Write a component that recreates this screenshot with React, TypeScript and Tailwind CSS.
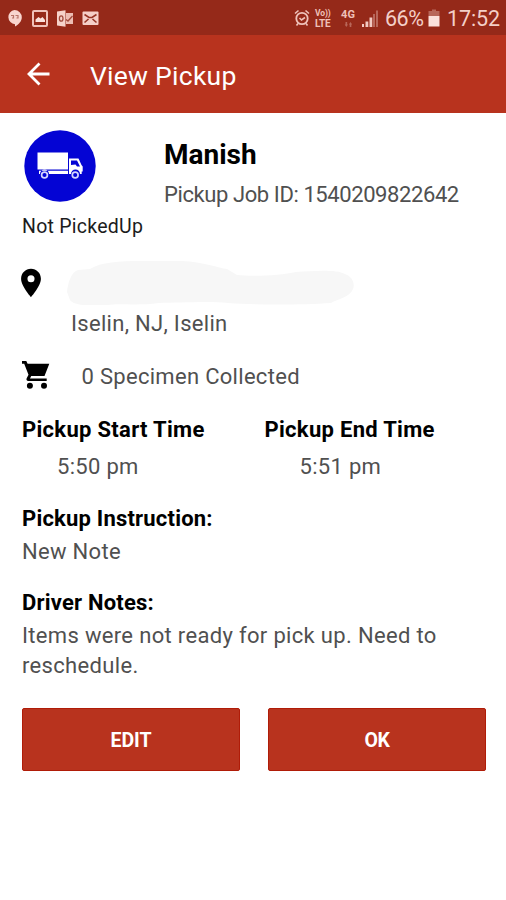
import React from "react";

function StatusBar() {
  return (
    <div className="flex h-[35px] items-center bg-[#952919] text-[#f3cfc8]">
      <svg className="block h-[35px] w-[110px]" viewBox="0 0 110 35">
        <path d="M14.500 10a7.300 7.300 0 0 1 7.300 7.300c0 4-3 7.200-6.800 9.200v-2.200a7.200 7.200 0 0 1-.5-14.300z" fill="#f8d5ce" />
        <path d="M11 15.500h2.500v2.500h-1.500M15.500 15.500h2.500v2.500h-1.500" fill="none" stroke="#b87468" strokeWidth="1.200" />
        <rect x="33" y="11" width="14" height="15" rx="1" fill="none" stroke="#f0c3bb" strokeWidth="2" />
        <path d="M35.500 22v-2.500l3-2.500 2 1.500 2-1.500 2.500 3v2z" fill="#fbe1dc" />
        <path d="M57 11.500l8.500-1.200v16.400L57 25.500z" fill="#f6d2ca" />
        <path d="M66 13h7v11h-7z" fill="#edbdb3" />
        <ellipse cx="61.200" cy="18.500" rx="1.800" ry="2.700" fill="none" stroke="#a14a3c" strokeWidth="1.300" />
        <path d="M66 19.500l2 1.500 4.500-5" fill="none" stroke="#a14a3c" strokeWidth="1.300" />
        <rect x="82.500" y="11.500" width="16" height="13.500" rx="1" fill="#f6cfc8" />
        <path d="M84.500 14.500l4.500 3h3l4.500-3M84.500 22.500l4-3.500M96.500 22.500l-4-3.500" fill="none" stroke="#973526" strokeWidth="1.600" />
      </svg>
      <svg className="ml-[184px] block h-[35px] w-[16px]" viewBox="0 0 16 35" fill="none" stroke="#efc2ba">
        <circle cx="8" cy="18.500" r="5.700" strokeWidth="1.800" />
        <path d="M5.500 18l2 2 3.500-2.500M4 23.500l-1.500 2M12 23.500l1.500 2M1 13.500l3.500-3M15 13.500l-3.500-3" strokeWidth="1.600" />
      </svg>
      <div className="mt-[1px] ml-[5px] w-[17px] font-bold whitespace-nowrap text-[#efc0b8]">
        <div className="text-[8.500px] leading-[10px] tracking-[-0.100px]">Vo))</div>
        <div className="text-[10px] leading-[11px] tracking-[-0.200px]">LTE</div>
      </div>
      <div className="ml-[9px] flex h-[35px] w-[16px] flex-col pt-[10px]">
        <span className="text-[11px] leading-[10px] font-bold text-[#efc0b8]">4G</span>
        <svg className="mt-[2px] ml-[2px] block h-[5px] w-[10px]" viewBox="0 0 10 6" fill="#b86659">
          <path d="M2 0h2v3h1L3 6 1 3h1zM7 6h2V3h1L8 0 6 3h1z" />
        </svg>
      </div>
      <svg className="ml-[4px] block h-[35px] w-[18px]" viewBox="0 0 18 35">
        <path d="M1 24h2v3H1zM4.500 21.500h2.800V27H4.500zM8.500 17.500h2.800V27H8.500z" fill="#f2c9c1" />
        <path d="M12 14h2v13h-2zM15 10.500h2V27h-2z" fill="#b8675a" />
      </svg>
      <span className="mt-[2px] ml-[6px] w-[39px] text-[21.500px] leading-[35px] tracking-[-0.500px] whitespace-nowrap">66%</span>
      <svg className="ml-[4px] block h-[35px] w-[12px]" viewBox="0 0 12 35">
        <path d="M4 9.500h4V11h3.500v5H.5v-5H4z" fill="#b8675a" />
        <path d="M.5 16h11v10.500H.5z" fill="#fbe1dc" />
      </svg>
      <span className="mt-[2px] ml-[7px] text-[21.500px] leading-[35px] tracking-[-0.100px] whitespace-nowrap">17:52</span>
    </div>
  );
}

function TruckBadge() {
  return (
    <svg className="ml-[2px] block h-[72px] w-[72px]" viewBox="0 0 72 72">
      <circle cx="36" cy="36" r="35.700" fill="#0404d4" />
      <path d="M13.500 22.500h30.500v17h-30.500z" fill="#fff" />
      <path d="M15 40.800h29V44H25a4.500 4.500 0 0 0-9 0h-1z" fill="#fff" />
      <path fillRule="evenodd" d="M45 28.500h9.500l3 6.500 1.200 1.500v5h-1V44H56a4.500 4.500 0 0 0-9 0h-2zM47 30.500v4.500l4.500-.5 1.500 2h3L53 30.500z" fill="#fff" />
      <circle cx="20.500" cy="45" r="2.900" fill="none" stroke="#d4d4ff" strokeWidth="1.700" />
      <circle cx="51.200" cy="45" r="2.900" fill="none" stroke="#d4d4ff" strokeWidth="1.700" />
    </svg>
  );
}

export default function App() {
  return (
    <div className="h-[900px] w-[506px] overflow-hidden bg-white font-['Roboto',sans-serif] text-[22px] leading-[30px] tracking-[0.300px] text-[#505050]">
      <StatusBar />
      <header className="flex h-[78px] items-center bg-[#b8331e] pl-[27px] text-white">
        <svg className="block h-[24px] w-[24px]" viewBox="0 0 24 24" fill="none" stroke="currentColor" strokeWidth="2.800">
          <path d="M22.500 12H2.500M12.500 1.500L2 12l10.500 10.500" />
        </svg>
        <h1 className="mt-[3px] ml-[39px] text-[26.500px] leading-[36px] tracking-[0.250px]">View Pickup</h1>
      </header>
      <main className="px-[22px]">
        <section className="flex h-[143px]">
          <div className="w-[142px] pt-[17px]">
            <TruckBadge />
            <div className="mt-[11px] text-[19.500px] leading-[28px] tracking-[0.250px] whitespace-nowrap text-[#1c1c1c]">Not PickedUp</div>
          </div>
          <div className="pt-[24px]">
            <h2 className="text-[28px] leading-[36px] font-bold tracking-normal text-black">Manish</h2>
            <div className="mt-[7px] tracking-[-0.410px] whitespace-nowrap">Pickup Job ID: 1540209822642</div>
          </div>
        </section>
        <section className="flex h-[102px]">
          <svg className="mt-[10px] -ml-[8px] block h-[34px] w-[34px]" viewBox="0 0 24 24" fill="#000">
            <path d="M12 2C8.130 2 5 5.130 5 9c0 5.250 7 13 7 13s7-7.750 7-13c0-3.870-3.130-7-7-7zm0 9.500a2.500 2.500 0 0 1 0-5 2.500 2.500 0 0 1 0 5z" />
          </svg>
          <div className="ml-[18px]">
            <svg className="mt-[5px] block h-[44px] w-[288px]" viewBox="0 0 288 44" fill="#f7f7f7">
              <path d="M1 31C2 22 5 11 12 9l12-1C35 1 53 0 76 0h40c21 1 37 7 45 8l10 6c18 2 45 0 59-3 16-1 40-3 49 2 8 3 10 10 8 15-3 8-15 10-22 14-30 2-75 2-103 0-19-2-51 0-69 0C72 45 52 42 42 44 25 45 8 45 4 39z" />
            </svg>
            <div className="mt-[4px] ml-[5px]">Iselin, NJ, Iselin</div>
          </div>
        </section>
        <section className="flex h-[57px]">
          <svg className="mt-[3px] block h-[28px] w-[28px]" viewBox="0 0 28 28" fill="#000">
            <path d="M0 0h4.300l1.300 2.700h21.700l-4.800 12.300H9.200L8 17.500h16.700v2.600H6.500c-2 0-2.500-1.500-1.700-3l1.700-3.300L2.200 2.800H0z" />
            <circle cx="7.900" cy="24.800" r="3" />
            <circle cx="22" cy="24.800" r="3" />
          </svg>
          <div className="mt-[4px] ml-[31.500px]">0 Specimen Collected</div>
        </section>
        <section className="grid h-[89px] grid-cols-[242.500px_1fr]">
          <div>
            <h3 className="font-bold text-black">Pickup Start Time</h3>
            <div className="mt-[7px] ml-[35px]">5:50 pm</div>
          </div>
          <div>
            <h3 className="font-bold text-black">Pickup End Time</h3>
            <div className="mt-[7px] ml-[35px]">5:51 pm</div>
          </div>
        </section>
        <section className="h-[84px]">
          <h3 className="font-bold tracking-[0.200px] text-black">Pickup Instruction:</h3>
          <p className="mt-[3px]">New Note</p>
        </section>
        <section className="h-[120px]">
          <h3 className="font-bold tracking-[0.200px] text-black">Driver Notes:</h3>
          <p className="mt-[3px] tracking-[0.330px]">Items were not ready for pick up. Need to<br />reschedule.</p>
        </section>
        <div className="grid grid-cols-[218px_218px] gap-[28px] text-[19.500px] font-bold text-white">
          <button className="h-[63px] rounded-[2px] border border-[#b01c08] bg-[#b8331e] pt-[2px] tracking-[-0.100px]">EDIT</button>
          <button className="h-[63px] rounded-[2px] border border-[#b01c08] bg-[#b8331e] pt-[2px] tracking-[-0.400px]">OK</button>
        </div>
      </main>
    </div>
  );
}
